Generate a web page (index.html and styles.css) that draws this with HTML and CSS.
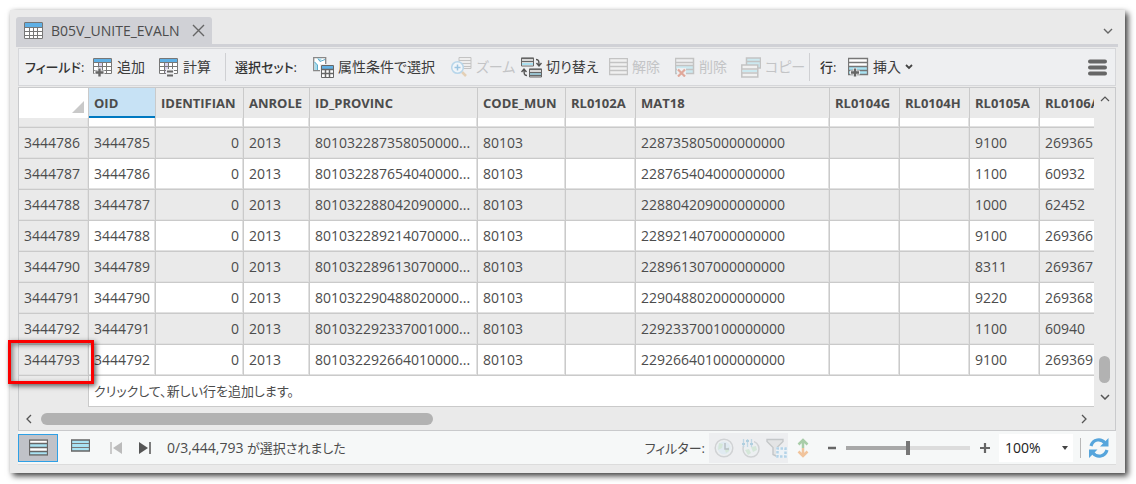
FILE: index.html
```html
<!DOCTYPE html>
<html lang="ja">
<head>
<meta charset="utf-8">
<title>B05V_UNITE_EVALN</title>
<link rel="stylesheet" href="styles.css">
</head>
<body>
<main class="window">
  <header class="tabs">
    <div class="tab">
      <svg width="19" height="17" viewBox="0 0 19 17"><path fill="#fff" d="M0 0h19v17H0z"/><path fill="#5fb0e5" d="M1 1h17v4H1z"/><path d="M.5.5h18v16H.5zM1 5.5h17M1 9.5h17M1 13.5h17M5.5 5v11M9.5 5v11M13.5 5v11" fill="none" stroke="#777"/></svg>
      <span class="tab-name">B05V_UNITE_EVALN</span>
      <button class="icon-btn" aria-label="閉じる"><svg width="13" height="13" viewBox="0 0 13 13"><path d="M1 1l11 11M12 1L1 12" stroke="#666" stroke-width="1.4"/></svg></button>
    </div>
    <button class="icon-btn tab-list" aria-label="タブ一覧"><svg width="10" height="6" viewBox="0 0 10 6"><path d="M1 1l4 4 4-4" fill="none" stroke="#666" stroke-width="1.4"/></svg></button>
  </header>
  <div class="content">
    <div class="toolbar" role="toolbar">
      <span class="group-label">フィールド:</span>
      <button class="tool"><svg width="20" height="20" viewBox="0 0 20 20"><path fill="#fff" d="M0 1h19v16H0z"/><path fill="#5fb0e5" d="M1 2h17v3H1z"/><path fill="#d9d2ee" d="M5 5h5v12H5z"/><path d="M.5 1.5h18v15H.5zM1 5.5h17M1 9.5h17M1 13.5h17M5.5 5v11M9.5 5v11M13.5 5v11" fill="none" stroke="#777"/><path d="M6.500 10.500v9M1.500 15.500h10" stroke="#eeeff1" stroke-width="4"/><path d="M6.500 11.500v8M2.500 15.500h8" stroke="#666" stroke-width="2.400"/></svg>追加</button>
      <button class="tool"><svg width="20" height="20" viewBox="0 0 20 20"><path fill="#fff" d="M0 1h19v16H0z"/><path fill="#5fb0e5" d="M1 2h17v3H1z"/><path fill="#d9d2ee" d="M5 5h5v12H5z"/><path d="M.5 1.5h18v15H.5zM1 5.5h17M1 9.5h17M1 13.5h17M5.500 5v11M9.500 5v11M13.500 5v11" fill="none" stroke="#777"/><path fill="#eeeff1" d="M7 12h8v8H7z"/><path d="M8 14.500h6M8 18.500h6" stroke="#666" stroke-width="2"/></svg>計算</button>
      <span class="separator"></span>
      <span class="group-label">選択セット:</span>
      <button class="tool"><svg width="21" height="21" viewBox="0 0 21 21"><path d="M.7.700h12v13h-12z" fill="#fff" stroke="#888" stroke-width="1.300"/><path d="M1.500 4l3 4v5h-3zM4 1.500h5l-2 3z" fill="#a9dcec"/><path d="M5 1.500l2 3 5-2M1.500 5l3 3v5" fill="none" stroke="#5aaccd"/><path d="M7 7h14v14H7z" fill="#eeeff1"/><path d="M8.500 8.500h12v12h-12z" fill="#fff" stroke="#666"/><path fill="#5fb0e5" d="M9 9h11v3H9z"/><path d="M9 12.500h11M9 16.500h11M12.500 12v8M16.500 12v8" stroke="#666" stroke-width="1.500"/></svg>属性条件で選択</button>
      <button class="tool" disabled><svg width="21" height="21" viewBox="0 0 21 21"><path d="M8 .5h12v11H8z" fill="#eee" stroke="#c3c3c3"/><path d="M8 3.500h12M8 6.500h12M8 9.500h12" stroke="#c3c3c3"/><path d="M11 15l4 4" stroke="#e4d0b6" stroke-width="2.500"/><circle cx="6.500" cy="10.500" r="5.800" fill="#f0f5f9" stroke="#b8d6ea" stroke-width="1.500"/><path d="M3.500 10.500h6M6.500 7.500v6" stroke="#9cc5e1" stroke-width="1.500"/></svg>ズーム</button>
      <button class="tool"><svg width="21" height="21" viewBox="0 0 21 21"><path d="M.5 1h12v8H.5zM8.500 12h12v8h-12z" fill="#fff" stroke="#666"/><path fill="#a9dff0" d="M1 6h11v2H1zM9 15h11v3H9z"/><path d="M0 1.500h13M0 4.500h13M8 12.500h13M8 15.500h13M8 18.500h13" stroke="#666" stroke-width="1.500"/><path d="M15 2.500c3 0 3 2 3 6M15.500 6l2.500 3 2.500-3M6 18.500c-3 0-3-2-3-6M.5 15L3 12l2.500 3" fill="none" stroke="#555" stroke-width="1.400"/></svg>切り替え</button>
      <button class="tool" disabled><svg width="19" height="18" viewBox="0 0 19 18"><path d="M.5.5h18v16H.5zM1 4.500h17M1 8.500h17M1 12.500h17" fill="#f0f0f0" stroke="#c3c3c3" stroke-width="1.500"/></svg>解除</button>
      <button class="tool" disabled><svg width="20" height="20" viewBox="0 0 20 20"><path fill="#cce9f0" d="M1 9h18v8H1z"/><path d="M.5 1.500h18v15H.5zM1 5.500h17M1 8.500h17M1 12.500h17" fill="none" stroke="#c3c3c3" stroke-width="1.500"/><path fill="#eeeff1" d="M2 11h9v9H2z"/><path d="M3 12.500l7 7M10 12.500l-7 7" stroke="#e0a89a" stroke-width="2.200"/></svg>削除</button>
      <button class="tool" disabled><svg width="20" height="21" viewBox="0 0 20 21"><path d="M5.500 1h14v10h-14zM5 4.500h14" fill="#cce9f0" stroke="#c3c3c3" stroke-width="1.500"/><path d="M.8 8h16v12H.8z" fill="#f1f1f1" stroke="#c3c3c3" stroke-width="1.500"/><path fill="#cce9f0" d="M1.500 13h14.500v2H1.500z"/><path d="M1 12h16M1 16h16" stroke="#c3c3c3" stroke-width="1.500"/></svg>コピー</button>
      <span class="separator"></span>
      <span class="group-label">行:</span>
      <button class="tool"><svg width="21" height="21" viewBox="0 0 21 21"><path fill="#fff" d="M1 1h18v9H1z"/><path fill="#a9e3f3" d="M1 9h18v9H1z"/><path d="M.5 1.500h19v16H.5zM1 5.500h18M1 9.500h18M1 13.500h18" fill="none" stroke="#777" stroke-width="1.300"/><path d="M7 11v9M2 15.500h10" stroke="#eeeff1" stroke-width="4"/><path d="M7 11.500v8M3 15.500h8" stroke="#666" stroke-width="2.400"/></svg>挿入<svg width="8" height="6" viewBox="0 0 8 6"><path d="M1 1l3 3 3-3" fill="none" stroke="#444" stroke-width="1.800"/></svg></button>
      <button class="icon-btn menu" aria-label="メニュー"><svg width="19" height="17" viewBox="0 0 19 17"><path d="M2 2.500h15M2 8.500h15M2 14.500h15" stroke="#666" stroke-width="4" stroke-linecap="round"/></svg></button>
    </div>

    <section class="grid">
      <div class="viewport">
        <table class="records">
          <colgroup><col class="c-row"><col class="c-oid"><col class="c-ident"><col class="c-role"><col class="c-prov"><col class="c-mun"><col class="c-rl"><col class="c-mat"><col class="c-rl"><col class="c-rl"><col class="c-rl"><col class="c-rl"></colgroup>
          <thead>
            <tr><td class="corner"><svg width="12" height="12" viewBox="0 0 12 12"><path d="M12 0v12H0z" fill="#c9c9c9"/></svg></td><th class="sorted">OID</th><th>IDENTIFIAN</th><th>ANROLE</th><th>ID_PROVINC</th><th>CODE_MUN</th><th>RL0102A</th><th>MAT18</th><th>RL0104G</th><th>RL0104H</th><th>RL0105A</th><th>RL0106A</th></tr>
          </thead>
          <tbody>
            <tr class="partial"><th></th><td></td><td></td><td></td><td></td><td></td><td></td><td></td><td></td><td></td><td></td><td></td></tr>
            <tr><th>3444786</th><td>3444785</td><td class="num">0</td><td>2013</td><td>801032287358050000...</td><td>80103</td><td></td><td>228735805000000000</td><td></td><td></td><td>9100</td><td>269365</td></tr>
            <tr><th>3444787</th><td>3444786</td><td class="num">0</td><td>2013</td><td>801032287654040000...</td><td>80103</td><td></td><td>228765404000000000</td><td></td><td></td><td>1100</td><td>60932</td></tr>
            <tr><th>3444788</th><td>3444787</td><td class="num">0</td><td>2013</td><td>801032288042090000...</td><td>80103</td><td></td><td>228804209000000000</td><td></td><td></td><td>1000</td><td>62452</td></tr>
            <tr><th>3444789</th><td>3444788</td><td class="num">0</td><td>2013</td><td>801032289214070000...</td><td>80103</td><td></td><td>228921407000000000</td><td></td><td></td><td>9100</td><td>269366</td></tr>
            <tr><th>3444790</th><td>3444789</td><td class="num">0</td><td>2013</td><td>801032289613070000...</td><td>80103</td><td></td><td>228961307000000000</td><td></td><td></td><td>8311</td><td>269367</td></tr>
            <tr><th>3444791</th><td>3444790</td><td class="num">0</td><td>2013</td><td>801032290488020000...</td><td>80103</td><td></td><td>229048802000000000</td><td></td><td></td><td>9220</td><td>269368</td></tr>
            <tr><th>3444792</th><td>3444791</td><td class="num">0</td><td>2013</td><td>801032292337001000...</td><td>80103</td><td></td><td>229233700100000000</td><td></td><td></td><td>1100</td><td>60940</td></tr>
            <tr><th>3444793</th><td>3444792</td><td class="num">0</td><td>2013</td><td>801032292664010000...</td><td>80103</td><td></td><td>229266401000000000</td><td></td><td></td><td>9100</td><td>269369</td></tr>
            <tr class="new-row"><th></th><td colspan="11">クリックして、新しい行を追加します。</td></tr>
          </tbody>
        </table>
      </div>
      <div class="vscroll">
        <svg width="10" height="6" viewBox="0 0 10 6"><path d="M1 5l4-4 4 4" fill="none" stroke="#555" stroke-width="1.200"/></svg>
        <span class="vthumb"></span>
        <svg width="10" height="6" viewBox="0 0 10 6"><path d="M1 1l4 4 4-4" fill="none" stroke="#555" stroke-width="1.500"/></svg>
      </div>
      <div class="hscroll">
        <svg width="6" height="10" viewBox="0 0 6 10"><path d="M5 1L1 5l4 4" fill="none" stroke="#555" stroke-width="1.300"/></svg>
        <span class="htrack"><span class="hthumb"></span></span>
        <svg width="6" height="10" viewBox="0 0 6 10"><path d="M1 1l4 4-4 4" fill="none" stroke="#555" stroke-width="1.300"/></svg>
      </div>
    </section>

    <footer class="status">
      <button class="view active" aria-label="すべてのレコードを表示"><svg width="19" height="17" viewBox="0 0 19 17"><path fill="#fff" d="M0 0h19v17H0z"/><path fill="#a9e3f3" d="M1 5h17v3H1zM1 13h17v3H1z"/><path d="M.5 1h18v15H.5zM1 4.500h17M1 8.500h17M1 12.500h17" fill="none" stroke="#666" stroke-width="1.300"/></svg></button>
      <button class="view" aria-label="選択レコードを表示"><svg width="19" height="17" viewBox="0 0 19 17"><path d="M.5 1h18v11H.5z" fill="#a9e3f3" stroke="#666" stroke-width="1.300"/><path d="M1 4.500h17M1 8.500h17" stroke="#777" stroke-width="1.200"/></svg></button>
      <button class="step" aria-label="最初へ" disabled><svg width="13" height="12" viewBox="0 0 13 12"><path d="M1 0v12" stroke="#bbb" stroke-width="1.500"/><path d="M12 0v12L3 6z" fill="#bbb"/></svg></button>
      <button class="step" aria-label="最後へ"><svg width="13" height="12" viewBox="0 0 13 12"><path d="M12 0v12" stroke="#555" stroke-width="1.500"/><path d="M1 0v12l9-6z" fill="#555"/></svg></button>
      <span class="count">0/3,444,793 <span class="count-text">が選択されました</span></span>
      <span class="filter-label">フィルター:</span>
      <span class="filters">
        <button class="icon-btn" aria-label="時間フィルター" disabled><svg width="20" height="20" viewBox="0 0 20 20"><circle cx="10" cy="10" r="8.800" fill="#eceff1" stroke="#d0d2d4" stroke-width="1.500"/><circle cx="10" cy="10" r="6.500" fill="#e0eaf1"/><path d="M5 5l4 1-1 4-4 2zM11 12l4-3v4l-3 2z" fill="#d5e7d9"/><path d="M11 5v6h4" fill="none" stroke="#b8c0c4" stroke-width="1.500"/></svg></button>
        <button class="icon-btn" aria-label="範囲フィルター" disabled><svg width="20" height="20" viewBox="0 0 20 20"><circle cx="11" cy="11" r="8" fill="#eceff1" stroke="#d0d2d4" stroke-width="1.500"/><path d="M5 12l4-1 2 4-3 2zM11 9l5-1 1 4-4 2z" fill="#d5e7d9"/><path d="M1 0h13v8H1z" fill="#edeef0"/><path d="M3.500 1v8M7.500 1v8M11.500 1v8" stroke="#c0d8e5" stroke-width="1.300"/><path d="M2 6h3M6 3h3M10 6h3" stroke="#b0cfdf" stroke-width="2"/></svg></button>
        <button class="icon-btn" aria-label="表示範囲でフィルター" disabled><svg width="22" height="20" viewBox="0 0 22 20"><path d="M1 1.500h16v2l-6 6v9l-4-2V9.500L1 3.500z" fill="#e3e4e5" stroke="#c4c7c9" stroke-width="1.400"/><path d="M10 9h12v11H10z" fill="#edf2f6"/><path d="M11.500 10.500h8v8h-8z" fill="none" stroke="#b4d3e8" stroke-width="2.500" stroke-dasharray="2.500 1.500" stroke-dashoffset="1"/></svg></button>
      </span>
      <button class="icon-btn updown" aria-label="並べ替え"><svg width="12" height="20" viewBox="0 0 12 20"><path d="M6 10V2M1.500 6.500L6 2l4.500 4.500" fill="none" stroke="#a9cda9" stroke-width="2.500"/><path d="M6 10v8M1.500 13.500L6 18l4.500-4.500" fill="none" stroke="#f1c49c" stroke-width="2.500"/></svg></button>
      <button class="icon-btn" aria-label="縮小"><svg width="10" height="10" viewBox="0 0 10 10"><path d="M1 5h8" stroke="#666" stroke-width="2.500"/></svg></button>
      <input class="zoom" type="range" min="0" max="100" value="50" aria-label="ズーム倍率">
      <button class="icon-btn" aria-label="拡大"><svg width="10" height="10" viewBox="0 0 10 10"><path d="M0 5h10M5 0v10" stroke="#666" stroke-width="2.200"/></svg></button>
      <span class="scale"><select aria-label="倍率"><option>100%</option></select><svg width="6" height="4" viewBox="0 0 6 4"><path d="M0 0h6L3 4z" fill="#444"/></svg></span>
      <button class="icon-btn refresh" aria-label="更新"><svg width="22" height="20" viewBox="0 0 22 20"><path d="M3 8C5 1 13 0 17 5M19 12c-2 7-10 8-14 3" fill="none" stroke="#56a5dc" stroke-width="3.200"/><path d="M20.500 0v8.500H12zM1 20v-8.500h8.500z" fill="#56a5dc"/></svg></button>
    </footer>
  </div>
  <span class="highlight"></span>
</main>
</body>
</html>
```
FILE: styles.css
```css
* { box-sizing: border-box; }
body {
  margin: 0;
  padding: 10px 11px 11px 10px;
  background: #fff;
  color: #4c4c4c;
  font: 14px/20px "Open Sans", "Noto Sans CJK JP", sans-serif;
}
svg { display: block; flex: none; }
button, select, input { margin: 0; font: inherit; color: inherit; }
button { display: flex; align-items: center; padding: 0; border: 0; background: none; }

.window {
  position: relative;
  padding-bottom: 8px;
  background: #eaeaea;
  box-shadow: 3px 3px 6px rgba(0, 0, 0, .75), 0 0 4px rgba(0, 0, 0, .08);
}
.tabs {
  display: flex;
  align-items: center;
  justify-content: space-between;
  margin: 0 7px 0 6px;
  padding-top: 7px;
  border-bottom: 3px solid #d0d1d6;
}
.tab {
  display: flex;
  align-items: center;
  height: 27px;
  padding: 0 7px 0 8px;
  gap: 8px;
  border-radius: 3px 3px 0 0;
  background: #d0d1d6;
}
.tab-name { margin-right: 4px; white-space: nowrap; }
.tab-list { margin-right: 5px; }
.content { margin: 1px 9px 0 8px; }

.toolbar {
  display: grid;
  grid-template-columns: 68px 66px 66px 10px 78px 138px 70px 88px 66px 66px 68px 11px 28px 70px 1fr;
  align-items: center;
  height: 38px;
  padding: 0 8px 0 6px;
  border: 1px solid #d6d7da;
  background: #eeeff1;
  white-space: nowrap;
}
.group-label { font-size: 13px; font-weight: 500; font-feature-settings: "palt"; color: #333; }
.tool { gap: 4px; font-feature-settings: "palt"; color: #3c3c3c; }
.tool:disabled { color: #c3c4c6; }
.separator { width: 1px; height: 28px; background: #cfd0d3; }
.menu { justify-self: end; }

.grid {
  display: grid;
  grid-template-columns: minmax(0, 1fr) 21px;
  margin-top: 1px;
  border: 1px solid #c9cacc;
  background: #eaeaea;
}
.viewport { overflow: hidden; }
.records { width: 1087px; table-layout: fixed; border-collapse: separate; border-spacing: 0; }
.c-row { width: 70px; }
.c-oid { width: 67px; }
.c-ident { width: 88px; }
.c-role { width: 66px; }
.c-prov { width: 168px; }
.c-mun { width: 88px; }
.c-rl { width: 70px; }
.c-mat { width: 194px; }
.records th, .records td {
  height: 31px;
  padding: 0 4px 0 5px;
  border-right: 1px solid #cacaca;
  border-bottom: 1px solid #cacaca;
  box-shadow: inset -1px -1px #e1e1e1;
  font-weight: 400;
  text-align: left;
  white-space: nowrap;
}
.records thead th { height: 30px; border-bottom: 0; font-size: 13px; font-weight: 700; background: #eaeaea; box-shadow: none; }
.records thead .sorted { background: #c7e2f5; box-shadow: inset 0 -2px #0079c1; }
.records .corner { height: 30px; padding: 8px 4px 0 53px; background: #fff; border-bottom: 0; box-shadow: none; }
.records tbody th { background: #eaeaea; }
.records tbody td { background: #fff; }
.records tbody tr:nth-child(even) td { background: #eaeaea; }
.records .partial th, .records .partial td { height: 10px; }
.records .num { text-align: right; }
.records .new-row th { border-bottom: 0; box-shadow: none; }
.records tbody .new-row:nth-child(even) td { font-size: 13px; font-feature-settings: "palt"; background: #fff; box-shadow: none; }

.vscroll { display: flex; flex-direction: column; align-items: center; padding: 8px 0 7px; }
.vthumb { width: 11px; height: 27px; margin: auto 0 11px; border-radius: 6px; background: #b2b2b2; }
.hscroll { grid-column: 1 / -1; display: flex; align-items: center; gap: 9px; height: 23px; padding: 0 28px 0 7px; }
.htrack { flex: 1; }
.hthumb { display: block; width: 38%; height: 12px; border-radius: 6px; background: #b2b2b2; }

.status {
  display: flex;
  align-items: center;
  height: 34px;
  padding-right: 6px;
  border-bottom: 1px solid #dcdcdc;
  background: #f6f8f8;
}
.view { justify-content: center; width: 40px; height: 28px; border: 1px solid transparent; margin-right: 2px; }
.view.active { border: 1px solid #2ea0e6; background: #c0c2c8; }
.step { width: 28px; justify-content: center; }
.count { margin-left: 9px; white-space: nowrap; }
.count-text { font-size: 13px; font-feature-settings: "palt"; }
.filter-label { margin-left: auto; font-size: 13px; font-feature-settings: "palt"; white-space: nowrap; }
.filters { display: flex; align-items: center; gap: 6px; height: 30px; margin-left: 4px; padding-left: 5px; background: #edeef0; }
.updown { margin: 0 18px 0 9px; }
.zoom {
  appearance: none;
  width: 124px;
  height: 14px;
  margin: 0 10px 0 9px;
  background: linear-gradient(90deg, #a8a8a8 50%, #dcdcdc 50%) center / 100% 4px no-repeat;
}
.zoom::-webkit-slider-thumb { appearance: none; width: 4px; height: 14px; background: #777; }
.scale { display: flex; align-items: center; width: 74px; height: 28px; margin-left: 9px; padding-right: 5px; background: #fff; }
.scale select { flex: 1; appearance: none; padding: 0 0 0 6px; border: 0; background: none; color: #222; }
.refresh { height: 20px; margin-left: 7px; padding-left: 7px; border-left: 1px solid #b8b8b8; }

.highlight {
  position: absolute;
  left: -2px;
  bottom: 89px;
  width: 86px;
  height: 44px;
  border: 3px solid #fb0000;
  box-shadow: 2px 2px 5px rgba(0, 0, 0, .6), inset 2px 2px 5px rgba(0, 0, 0, .45);
}
```
